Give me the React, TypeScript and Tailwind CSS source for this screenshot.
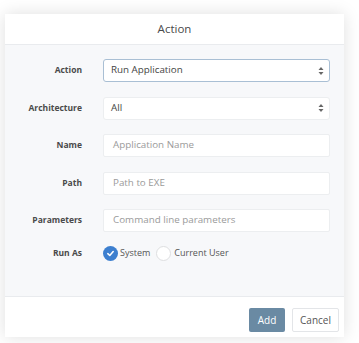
const font = { fontFamily: '"Open Sans", "Liberation Sans", sans-serif' };

function Caret() {
  return (
    <svg width="6" height="9" viewBox="0 0 6 9" className="absolute right-[5px] top-1/2 -translate-y-1/2">
      <path d="M3 0.5 L5.5 3.5 H0.5 Z" fill="#666" />
      <path d="M3 8.5 L5.5 5.5 H0.5 Z" fill="#666" />
    </svg>
  );
}

function Label({ children }: { children: string }) {
  return <div className="w-[77px] shrink-0 text-right text-[8.5px] font-bold text-[#4a4a4a]">{children}</div>;
}

function Select({ value, focus }: { value: string; focus?: boolean }) {
  return (
    <div
      className={`relative flex h-[23px] flex-1 items-center rounded-[3px] bg-white pl-[7px] text-[9.8px] text-[#444] border ${
        focus ? "border-[#a9bfd4]" : "border-[#eceef0]"
      }`}
    >
      {value}
      <Caret />
    </div>
  );
}

function Input({ placeholder }: { placeholder: string }) {
  return (
    <div className="flex h-[23px] flex-1 items-center rounded-[2px] border border-[#eceef0] bg-white pl-[9px] text-[9.8px] text-[#9a9a9a]">
      {placeholder}
    </div>
  );
}

function Row({ label, children }: { label: string; children: React.ReactNode }) {
  return (
    <div className="flex items-center gap-[21px]">
      <Label>{label}</Label>
      {children}
    </div>
  );
}

export default function App() {
  return (
    <div className="h-[343px] w-[359px] bg-white pt-[14px] pl-[5px]" style={font}>
      <div className="w-[339px] bg-white shadow-[0_0_16px_rgba(0,0,0,0.13)]">
        <div className="flex h-[31px] items-center justify-center border-b border-[#e9ebee] text-[11.5px] text-[#4a4a4a]">
          Action
        </div>
        <div className="flex h-[251px] flex-col gap-[14.5px] bg-[#f7f8fa] pt-[14px] pr-[14px]">
          <Row label="Action">
            <Select value="Run Application" focus />
          </Row>
          <Row label="Architecture">
            <Select value="All" />
          </Row>
          <Row label="Name">
            <Input placeholder="Application Name" />
          </Row>
          <Row label="Path">
            <Input placeholder="Path to EXE" />
          </Row>
          <Row label="Parameters">
            <Input placeholder="Command line parameters" />
          </Row>
          <div className="mt-[-1px] flex items-center gap-[21px]">
            <Label>Run As</Label>
            <div className="flex items-center text-[9px] text-[#555]">
              <span className="flex h-[15px] w-[15px] items-center justify-center rounded-full bg-[#3d7fcf]">
                <svg width="9" height="9" viewBox="0 0 10 10">
                  <path d="M2 5.2 L4.2 7.2 L8 2.8" stroke="white" strokeWidth="1.7" fill="none" strokeLinecap="round" strokeLinejoin="round" />
                </svg>
              </span>
              <span className="ml-[2px]">System</span>
              <span className="ml-[6px] h-[15px] w-[15px] rounded-full border border-[#dedfe1] bg-white" />
              <span className="ml-[3px]">Current User</span>
            </div>
          </div>
        </div>
        <div className="flex h-[41px] items-start justify-end gap-[7px] border-t border-[#e9ebee] pt-[11px] pr-[5px]">
          <button className="h-[24px] w-[36px] rounded-[2px] bg-[#6a8aa3] text-[10px] text-white">Add</button>
          <button className="h-[24px] w-[47px] rounded-[2px] border border-[#e3e5e8] bg-white text-[10px] text-[#555]">Cancel</button>
        </div>
      </div>
    </div>
  );
}
